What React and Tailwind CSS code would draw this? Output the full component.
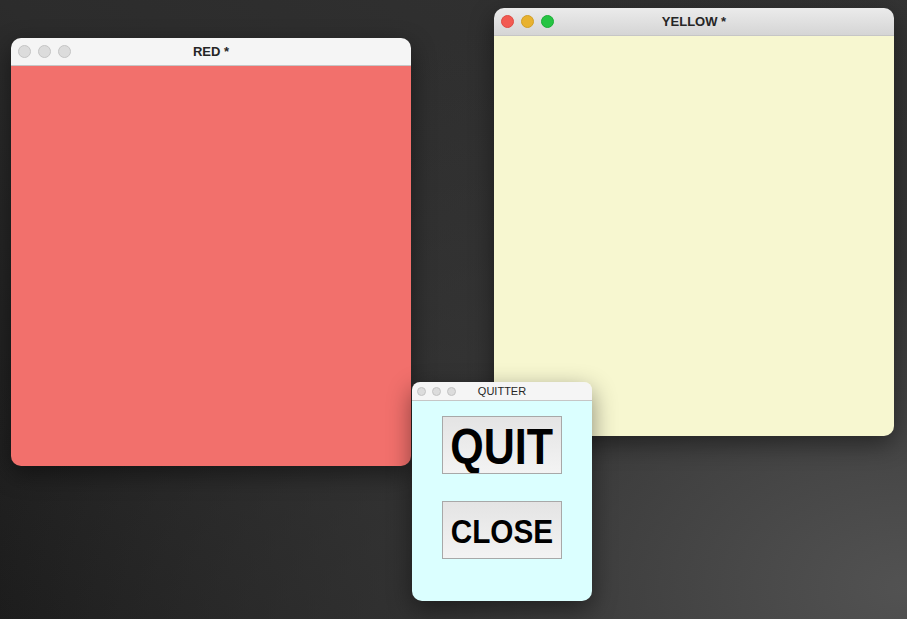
const Light = ({ color, size }) => (
  <span
    className={`block rounded-full border ${size} ${color}`}
  />
)

function TitleBar({ title, active, small }) {
  const dot = small ? 'h-[9px] w-[9px]' : 'h-[13px] w-[13px]'
  return (
    <div
      className={`relative flex shrink-0 items-center border-b border-[#c6c6c6] ${
        small ? 'h-[19px] px-[5px] gap-[6px]' : 'h-[28px] px-[7px] gap-[7px]'
      } ${active ? 'bg-[linear-gradient(#ebebeb,#d5d5d5)]' : 'bg-[#f5f5f5]'}`}
    >
      {active ? (
        <>
          <Light size={dot} color="bg-[#f25a52] border-[#de4a43]" />
          <Light size={dot} color="bg-[#e8b22f] border-[#d29f24]" />
          <Light size={dot} color="bg-[#26c443] border-[#1aae35]" />
        </>
      ) : (
        <>
          <Light size={dot} color="bg-[#dcdcdc] border-[#c4c4c4]" />
          <Light size={dot} color="bg-[#dcdcdc] border-[#c4c4c4]" />
          <Light size={dot} color="bg-[#dcdcdc] border-[#c4c4c4]" />
        </>
      )}
      <span
        className={`absolute inset-0 flex items-center justify-center text-[#262626] ${
          small ? 'text-[11px] font-normal' : 'text-[13px] font-bold'
        }`}
      >
        {title}
      </span>
    </div>
  )
}

function Win({ className, title, active, small, body, children }) {
  return (
    <div
      className={`absolute flex flex-col overflow-hidden rounded-[10px] shadow-[0_8px_24px_rgba(0,0,0,0.45)] ${className}`}
    >
      <TitleBar title={title} active={active} small={small} />
      <div className={`flex-1 ${body}`}>{children}</div>
    </div>
  )
}

export default function App() {
  return (
    <div
      className="relative h-[619px] w-[907px] overflow-hidden bg-[radial-gradient(ellipse_at_100%_95%,rgba(82,82,82,1),rgba(58,58,58,0.6)_40%,rgba(40,40,40,0)_75%),linear-gradient(to_top_right,#1a1a1a,#2c2c2c_50%,#333333)]"
      style={{ fontFamily: '"Liberation Sans", Arial, sans-serif' }}
    >
      <Win
        className="left-[11px] top-[38px] h-[428px] w-[400px]"
        title="RED *"
        body="bg-[#f2706c]"
      />
      <Win
        className="left-[494px] top-[8px] h-[428px] w-[400px]"
        title="YELLOW *"
        active
        body="bg-[#f7f7d0]"
      />
      <Win
        className="left-[412px] top-[382px] h-[219px] w-[180px] rounded-t-[8px]"
        title="QUITTER"
        small
        body="bg-[#dbffff]"
      >
        <div className="flex flex-col items-center pt-[15px] gap-[27px]">
          <button className="flex h-[58px] w-[120px] items-center justify-center overflow-hidden border border-[#a8a8a8] bg-[linear-gradient(#e4e4e4,#f3f3f3)] pt-[3px] text-black">
            <span className="inline-block scale-x-[0.86] text-[50px] font-bold leading-none">
              QUIT
            </span>
          </button>
          <button className="flex h-[58px] w-[120px] items-center justify-center overflow-hidden border border-[#a8a8a8] bg-[linear-gradient(#e4e4e4,#f3f3f3)] pt-[2px] text-black">
            <span className="inline-block scale-x-[0.9] text-[33px] font-bold leading-none">
              CLOSE
            </span>
          </button>
        </div>
      </Win>
    </div>
  )
}
